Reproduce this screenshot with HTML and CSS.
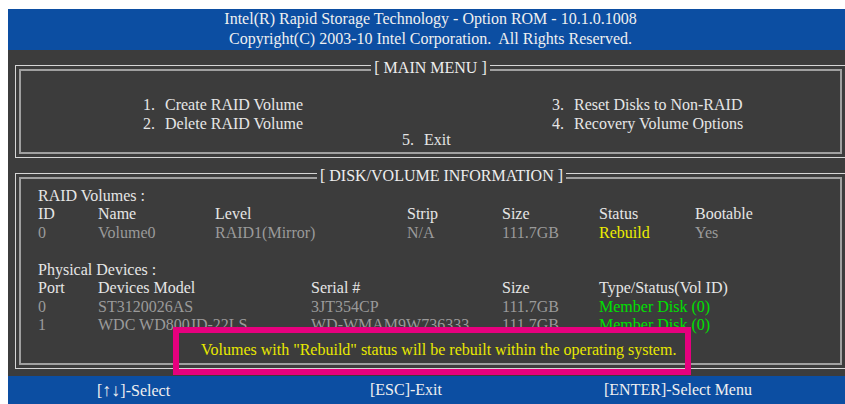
FILE: index.html
```html
<!DOCTYPE html>
<html lang="en">

<head>
    <meta charset="UTF-8">
    <title>Intel(R) Rapid Storage Technology - Option ROM</title>
    <link rel="stylesheet" href="styles.css">
</head>

<body>
    <div class="screen">
        <header class="title-bar">
            <div>Intel(R) Rapid Storage Technology - Option ROM - 10.1.0.1008</div>
            <div>Copyright(C) 2003-10 Intel Corporation.&nbsp; All Rights Reserved.</div>
        </header>

        <main class="content">
            <fieldset class="panel main-menu">
                <legend>[ MAIN MENU ]</legend>
                <div class="menu">
                    <ul class="menu-col first">
                        <li><span class="num">1.</span>Create RAID Volume</li>
                        <li><span class="num">2.</span>Delete RAID Volume</li>
                    </ul>
                    <ul class="menu-col exit">
                        <li><span class="num">5.</span>Exit</li>
                    </ul>
                    <ul class="menu-col">
                        <li><span class="num">3.</span>Reset Disks to Non-RAID</li>
                        <li><span class="num">4.</span>Recovery Volume Options</li>
                    </ul>
                </div>
            </fieldset>

            <fieldset class="panel disk-info">
                <legend>[ DISK/VOLUME INFORMATION ]</legend>

                <div class="section-label">RAID Volumes :</div>
                <div class="table raid">
                    <span>ID</span>
                    <span>Name</span>
                    <span>Level</span>
                    <span>Strip</span>
                    <span>Size</span>
                    <span>Status</span>
                    <span>Bootable</span>

                    <span class="val">0</span>
                    <span class="val">Volume0</span>
                    <span class="val">RAID1(Mirror)</span>
                    <span class="val">N/A</span>
                    <span class="val">111.7GB</span>
                    <span class="rebuild">Rebuild</span>
                    <span class="val">Yes</span>
                </div>

                <div class="section-label spaced">Physical Devices :</div>
                <div class="table devices">
                    <span>Port</span>
                    <span>Devices Model</span>
                    <span>Serial #</span>
                    <span>Size</span>
                    <span>Type/Status(Vol ID)</span>

                    <span class="val">0</span>
                    <span class="val">ST3120026AS</span>
                    <span class="val">3JT354CP</span>
                    <span class="val">111.7GB</span>
                    <span class="member">Member Disk (0)</span>

                    <span class="val">1</span>
                    <span class="val">WDC WD800JD-22LS</span>
                    <span class="val">WD-WMAM9W736333</span>
                    <span class="val">111.7GB</span>
                    <span class="member">Member Disk (0)</span>
                </div>
            </fieldset>
        </main>

        <footer class="key-bar">
            <span>[<span class="arrows">&uarr;&darr;</span>]-Select</span>
            <span>[ESC]-Exit</span>
            <span>[ENTER]-Select Menu</span>
        </footer>

        <div class="notice">Volumes with "Rebuild" status will be rebuilt within the operating system.</div>
    </div>
</body>

</html>
```

FILE: styles.css
```css
* {
    margin: 0;
    padding: 0;
    box-sizing: border-box;
}

html {
    background-color: #FFFFFF;
    overflow: hidden;
}

body {
    margin: 9px 0 0 8px;
    font-family: "Liberation Serif", "Times New Roman", serif;
}

.screen {
    position: relative;
    width: 845px;
    height: 395px;
    display: flex;
    flex-direction: column;
    background-color: #3C3C3C;
    color: #E6E6E6;
    font-size: 16px;
}

.title-bar {
    height: 41px;
    background-color: #0C4EA2;
    color: #F0F0F0;
    text-align: center;
    line-height: 20px;
}

.content {
    flex: 1;
    display: flex;
    flex-direction: column;
    gap: 5px;
    padding: 5px 7px 7px 7px;
}

.panel {
    min-width: 0;
    border: 1px solid #D6D6D6;
    box-shadow: inset 0 0 0 3px #3C3C3C, inset 0 0 0 5px #A0A0A0;
}

.panel legend {
    margin: 0 auto;
    padding: 5px 3px 0 3px;
    line-height: 16px;
    background-color: #3C3C3C;
    color: #EEEEEE;
}

/* main menu */

.main-menu {
    padding: 18.5px 0 8px 0;
}

.menu {
    display: flex;
    line-height: 19px;
}

.menu-col {
    list-style: none;
}

.menu-col.first {
    margin-left: 127px;
    width: 259px;
}

.menu-col.exit {
    width: 150px;
    padding-top: 35px;
}

.num {
    display: inline-block;
    width: 22px;
}

/* disk / volume info */

.disk-info {
    flex: 1;
    padding: 3px 0 0 22px;
    line-height: 18.5px;
}

.section-label.spaced {
    margin-top: 18.5px;
}

.table {
    display: grid;
}

.table.raid {
    grid-template-columns: 60px 117px 192px 95px 97px 96px 1fr;
}

.table.devices {
    grid-template-columns: 60px 213px 191px 97px 1fr;
}

.val {
    color: #9A9A9A;
}

.rebuild {
    color: #EEEE00;
}

.member {
    color: #00E000;
}

/* bottom key bar */

.key-bar {
    height: 28px;
    display: grid;
    grid-template-columns: 273px 234px 1fr;
    padding-left: 89px;
    background-color: #0C4EA2;
    color: #F0F0F0;
    line-height: 28px;
}

.arrows {
    font-size: 18px;
}

/* highlighted message over the device list */

.notice {
    position: absolute;
    left: 165px;
    top: 318px;
    width: 518px;
    height: 48px;
    border: 6px solid #E6007E;
    padding: 8px 0 0 22px;
    line-height: 18px;
    color: #E8E800;
}
```
